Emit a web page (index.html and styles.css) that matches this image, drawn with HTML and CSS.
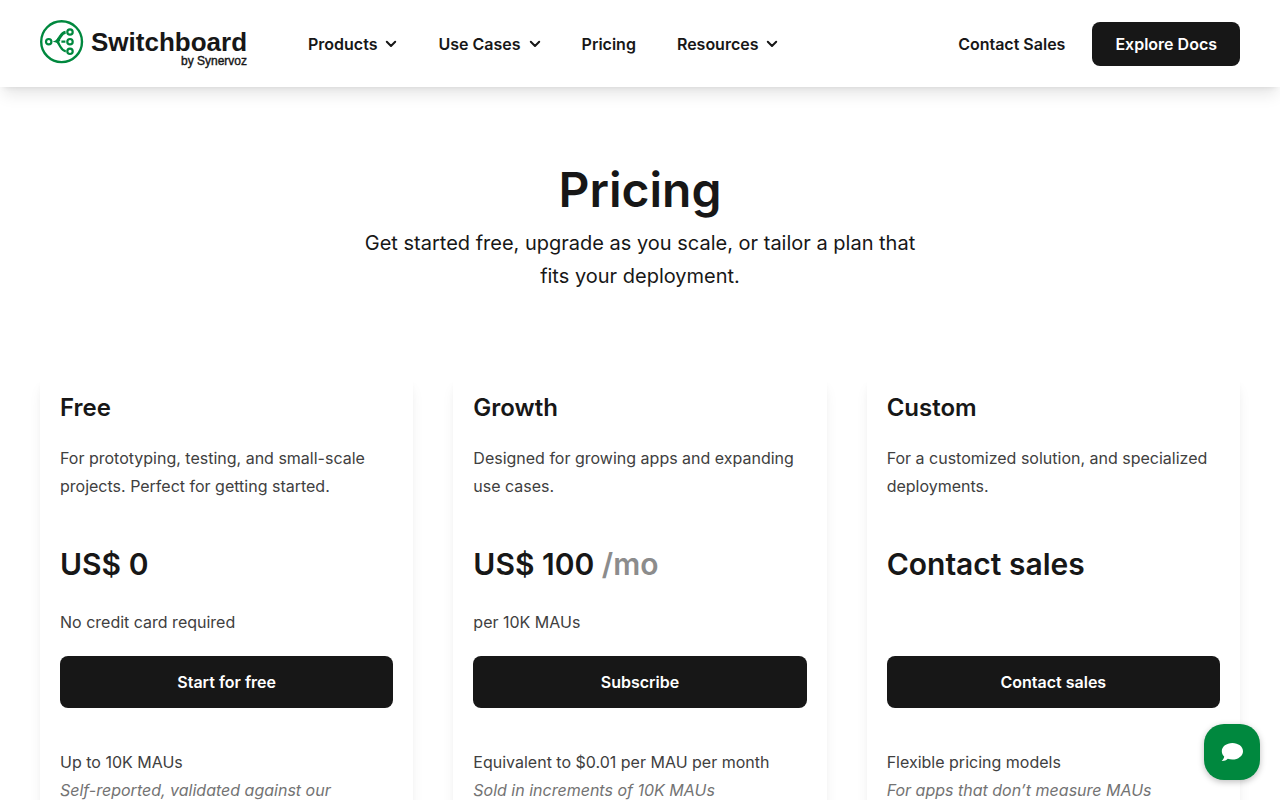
FILE: index.html
```html
<!DOCTYPE html>
<html lang="en">
<head>
    <meta charset="UTF-8">
    <meta name="viewport" content="width=device-width, initial-scale=1.0">
    <title>Pricing | Switchboard</title>
    <link rel="stylesheet" href="styles.css">
</head>
<body>
    <header class="header">
        <a class="logo" href="#" aria-label="Switchboard by Synervoz">
            <svg class="logo-mark" viewBox="0 0 44 44" fill="none" stroke="#00883e" stroke-width="2.2">
                <circle cx="21.600" cy="21.700" r="20.4" stroke-width="2.4"/>
                <circle cx="8.700" cy="21.700" r="2.7"/>
                <circle cx="30" cy="12" r="2.7"/>
                <circle cx="30" cy="21.700" r="2.7"/>
                <circle cx="30" cy="31.300" r="2.7"/>
                <path d="M25.600 12.200c-2.800.4-3.800 1.800-5.200 4.200l-3.400 5.300" stroke-width="3"/>
                <path d="M17.400 21.700l3.200 5.400c1.400 2.600 2.600 3.900 5.200 4.200M21.400 21.700h4"/>
                <path d="M12.600 21.700c2.400-.6 4.200-2 5.400-4.200l2.400 2.800-1.200 1.400 1.400 4.200c-1.800-2.400-4.600-3.800-8-4.200z" fill="#00883e" stroke="none"/>
            </svg>
            <span class="logo-text">
                <span class="logo-name">Switchboard</span>
                <span class="logo-by">by Synervoz</span>
            </span>
        </a>
        <nav class="nav">
            <button class="nav-item" type="button">Products
                <svg class="chevron" viewBox="0 0 12 8"><path d="M1.800 1.800L6 6l4.200-4.200"/></svg>
            </button>
            <button class="nav-item" type="button">Use Cases
                <svg class="chevron" viewBox="0 0 12 8"><path d="M1.800 1.800L6 6l4.200-4.200"/></svg>
            </button>
            <a class="nav-item" href="#">Pricing</a>
            <button class="nav-item" type="button">Resources
                <svg class="chevron" viewBox="0 0 12 8"><path d="M1.800 1.800L6 6l4.200-4.200"/></svg>
            </button>
        </nav>
        <div class="header-actions">
            <a class="nav-item" href="#">Contact Sales</a>
            <a class="btn btn-docs" href="#">Explore Docs</a>
        </div>
    </header>

    <main>
        <section class="hero">
            <h1>Pricing</h1>
            <p>Get started free, upgrade as you scale, or tailor a plan that fits your deployment.</p>
        </section>

        <section class="plans">
            <article class="card">
                <h2>Free</h2>
                <p class="summary">For prototyping, testing, and small-scale projects. Perfect for getting started.</p>
                <p class="price">US$ 0</p>
                <p class="unit">No credit card required</p>
                <a class="btn btn-plan" href="#">Start for free</a>
                <p>Up to 10K MAUs</p>
                <p class="note">Self-reported, validated against our</p>
            </article>
            <article class="card">
                <h2>Growth</h2>
                <p class="summary">Designed for growing apps and expanding use cases.</p>
                <p class="price">US$ 100 <span>/mo</span></p>
                <p class="unit">per 10K MAUs</p>
                <a class="btn btn-plan" href="#">Subscribe</a>
                <p>Equivalent to $0.01 per MAU per month</p>
                <p class="note">Sold in increments of 10K MAUs</p>
            </article>
            <article class="card">
                <h2>Custom</h2>
                <p class="summary">For a customized solution, and specialized deployments.</p>
                <p class="price">Contact sales</p>
                <p class="unit"></p>
                <a class="btn btn-plan" href="#">Contact sales</a>
                <p>Flexible pricing models</p>
                <p class="note">For apps that don’t measure MAUs</p>
            </article>
        </section>
    </main>

    <button class="chat" type="button" aria-label="Open chat">
        <svg viewBox="0 0 24 20" fill="#fff">
            <path d="M12.400 1C6.500 1 1.800 4.600 1.800 9.200c0 2.200 1 4 2.400 5.400-.2 1.600-1 3.200-2.600 4.400 2.400.2 4.600-.6 6.200-2.200 1.400.5 3 .7 4.600.7 5.900 0 10.600-3.700 10.600-8.300S18.300 1 12.400 1z"/>
        </svg>
    </button>
</body>
</html>
```

FILE: styles.css
```css
* {
    box-sizing: border-box;
}
body {
    margin: 0;
    height: 100vh;
    overflow: hidden;
    font-family: Inter, sans-serif;
    font-size: 16px;
    line-height: 28px;
    color: #404040;
    background-color: #fff;
}
h1, h2, p {
    margin: 0;
}
h1, h2 {
    color: #171717;
    font-weight: 600;
}
a {
    text-decoration: none;
}
.header {
    position: relative;
    display: flex;
    align-items: center;
    height: 87px;
    padding: 0 40px;
    background-color: #fff;
    box-shadow: 0 10px 15px -3px rgba(0,0,0,0.1), 0 4px 6px -4px rgba(0,0,0,0.1);
}
.logo {
    display: flex;
    align-items: flex-start;
    gap: 7px;
    margin-right: 61px;
    color: #171717;
    font-family: "Liberation Sans", Arial, sans-serif;
}
.logo-mark {
    width: 44px;
    height: 44px;
}
.logo-text {
    display: flex;
    flex-direction: column;
    align-items: flex-end;
    padding-top: 9px;
}
.logo-name {
    font-size: 26px;
    font-weight: 700;
    line-height: 26px;
}
.logo-by {
    font-size: 12px;
    line-height: 12px;
    -webkit-text-stroke: 0.4px #171717;
}
.nav {
    display: flex;
    gap: 41px;
}
.nav-item {
    display: flex;
    align-items: center;
    gap: 8px;
    padding: 0;
    border: none;
    background: none;
    color: #171717;
    font-family: inherit;
    font-size: 16px;
    font-weight: 600;
    line-height: 24px;
    cursor: pointer;
}
.chevron {
    width: 12px;
    height: 8px;
    fill: none;
    stroke: #171717;
    stroke-width: 2;
    stroke-linecap: round;
    stroke-linejoin: round;
}
.header-actions {
    display: flex;
    align-items: center;
    gap: 27px;
    margin-left: auto;
}
.btn {
    display: block;
    border-radius: 8px;
    background-color: #171717;
    color: #fff;
    font-weight: 600;
    text-align: center;
}
.btn:hover {
    background-color: #333;
}
.btn-docs {
    padding: 8px 23px;
}
.hero {
    max-width: 580px;
    margin: 0 auto;
    padding: 73px 0 83px;
    text-align: center;
}
.hero h1 {
    font-size: 48px;
    line-height: 60px;
}
.hero p {
    margin-top: 7px;
    color: #171717;
    font-size: 20px;
    line-height: 33px;
}
.plans {
    display: grid;
    grid-template-columns: repeat(3, 1fr);
    gap: 40px;
    padding: 0 40px;
}
.card {
    padding: 16px 20px 40px;
    border-radius: 8px;
    box-shadow: 0 10px 15px -3px rgba(0,0,0,0.08), 0 4px 6px -2px rgba(0,0,0,0.05);
}
.card h2 {
    font-size: 24px;
    line-height: 32px;
}
.summary {
    min-height: 56px;
    margin-top: 20px;
}
.price {
    margin-top: 45px;
    color: #171717;
    font-size: 30px;
    font-weight: 600;
    line-height: 38px;
}
.price span {
    color: #8c8c8c;
}
.unit {
    min-height: 28px;
    margin-top: 25px;
}
.btn-plan {
    margin: 20px 0 40px;
    padding: 12px;
}
.note {
    color: #737373;
    font-style: italic;
}
.chat {
    position: fixed;
    right: 20px;
    bottom: 20px;
    display: flex;
    align-items: center;
    justify-content: center;
    width: 56px;
    height: 56px;
    border: none;
    border-radius: 20px;
    background-color: #00883e;
    box-shadow: 0 2px 6px rgba(0,0,0,0.25);
    cursor: pointer;
}
.chat svg {
    width: 24px;
    height: 20px;
}
```
